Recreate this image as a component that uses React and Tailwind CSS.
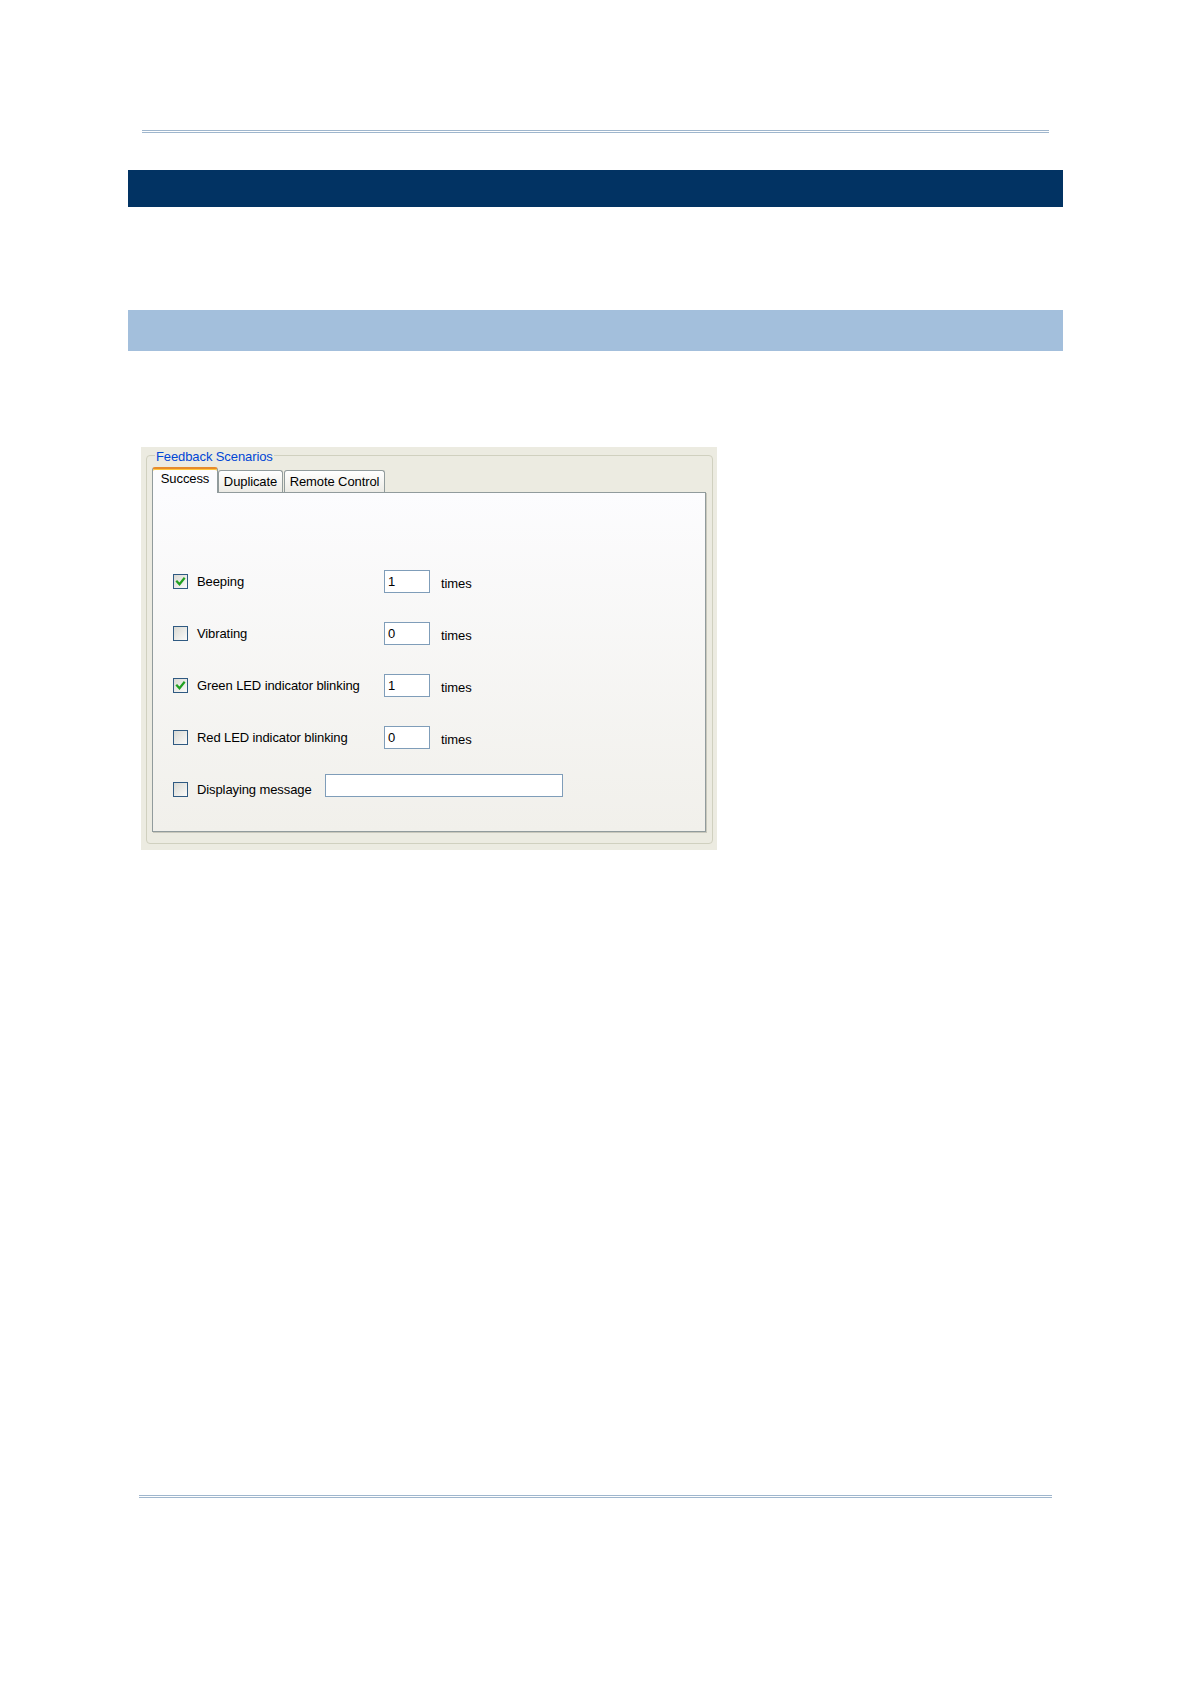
import React from "react";

function CheckBox({ checked }) {
  return (
    <span className="flex w-[15px] h-[15px] shrink-0 items-center justify-center border border-[#2f5a82] bg-linear-to-br from-[#d9d9d3] to-[#fbfbfa]">
      {checked && (
        <svg width="13" height="13" viewBox="0 0 13 13">
          <polyline
            points="3,6.5 5.5,9.2 10,3.6"
            fill="none"
            stroke="#21a121"
            strokeWidth="2.2"
            strokeLinecap="square"
          />
        </svg>
      )}
    </span>
  );
}

function Row({ checked, label, value, last }) {
  return (
    <div className={"flex h-[23px] items-center" + (last ? "" : " mb-[29px]")}>
      <div className="flex w-[211px] items-center">
        <CheckBox checked={checked} />
        <span className="ml-[9px] leading-[15px] whitespace-nowrap">{label}</span>
      </div>
      <input
        readOnly
        value={value}
        className="w-[46px] h-[23px] border border-[#7f9db9] bg-white px-[3px] text-[13px] leading-[15px] text-black outline-none"
      />
      <span className="ml-[11px] pt-[4px] leading-[15px]">times</span>
    </div>
  );
}

export default function App() {
  return (
    <div className="min-h-[1683px] w-full bg-white font-['Liberation_Sans',Arial,sans-serif] text-[13px] tracking-[-0.1px] text-black">
      {/* header rule */}
      <div className="pt-[130px]">
        <div className="ml-[142px] w-[907px] h-[1px] bg-[#9fb6cd]" />
        <div className="ml-[142px] mt-[1px] w-[907px] h-[1px] bg-[#9fb6cd]" />
      </div>

      {/* dark title bar */}
      <div className="ml-[128px] mt-[37px] w-[935px] h-[37px] bg-[#023363]" />

      {/* light sub-title bar */}
      <div className="ml-[128px] mt-[103px] w-[935px] h-[41px] bg-[#a3bfdc]" />

      {/* screenshot panel */}
      <div className="ml-[141px] mt-[96px] w-[576px] h-[403px] bg-[#ecebe1] pt-[8px] pl-[5px]">
        <div className="relative w-[567px] h-[389px] rounded-[4px] border border-[#d0d0bf] pt-[11px] pl-[5px]">
          <span className="absolute left-[8px] top-[-7px] bg-[#ecebe1] px-[1px] leading-[15px] text-[#0046d5]">
            Feedback Scenarios
          </span>

          {/* tabs */}
          <div className="flex h-[25px] items-end">
            <div className="relative z-10 -mb-[1px] h-[26px] w-[66px] rounded-t-[3px] border-x border-t-2 border-x-[#919b9c] border-t-[#e68b2c] bg-[#fcfcfe] pt-[2px] text-center leading-[15px] shadow-[inset_0_1px_0_#ffc73c]">
              Success
            </div>
            <div className="h-[22px] w-[65px] rounded-t-[3px] border border-b-0 border-[#919b9c] bg-linear-to-b from-white to-[#ecebe5] pt-[3px] text-center leading-[15px]">
              Duplicate
            </div>
            <div className="ml-[1px] h-[22px] w-[101px] rounded-t-[3px] border border-b-0 border-[#919b9c] bg-linear-to-b from-white to-[#ecebe5] pt-[3px] text-center leading-[15px] whitespace-nowrap">
              Remote Control
            </div>
          </div>

          {/* tab page */}
          <div className="w-[554px] h-[340px] border border-[#919b9c] bg-linear-to-b from-[#fcfcfe] to-[#f1f0eb] pl-[20px] pt-[77px] shadow-[1px_1px_0_#c9c8bc]">
            <Row checked label="Beeping" value="1" />
            <Row label="Vibrating" value="0" />
            <Row checked label="Green LED indicator blinking" value="1" />
            <Row label="Red LED indicator blinking" value="0" />
            <div className="flex h-[23px] items-center">
              <div className="flex w-[152px] items-center">
                <CheckBox />
                <span className="ml-[9px] leading-[15px] whitespace-nowrap">Displaying message</span>
              </div>
              <input
                readOnly
                value=""
                className="mb-[9px] w-[238px] h-[23px] border border-[#7f9db9] bg-white px-[3px] text-[13px] outline-none"
              />
            </div>
          </div>
        </div>
      </div>

      {/* footer rule */}
      <div className="mt-[645px]">
        <div className="ml-[139px] w-[913px] h-[1px] bg-[#9fb6cd]" />
        <div className="ml-[139px] mt-[1px] w-[913px] h-[1px] bg-[#9fb6cd]" />
      </div>
    </div>
  );
}
